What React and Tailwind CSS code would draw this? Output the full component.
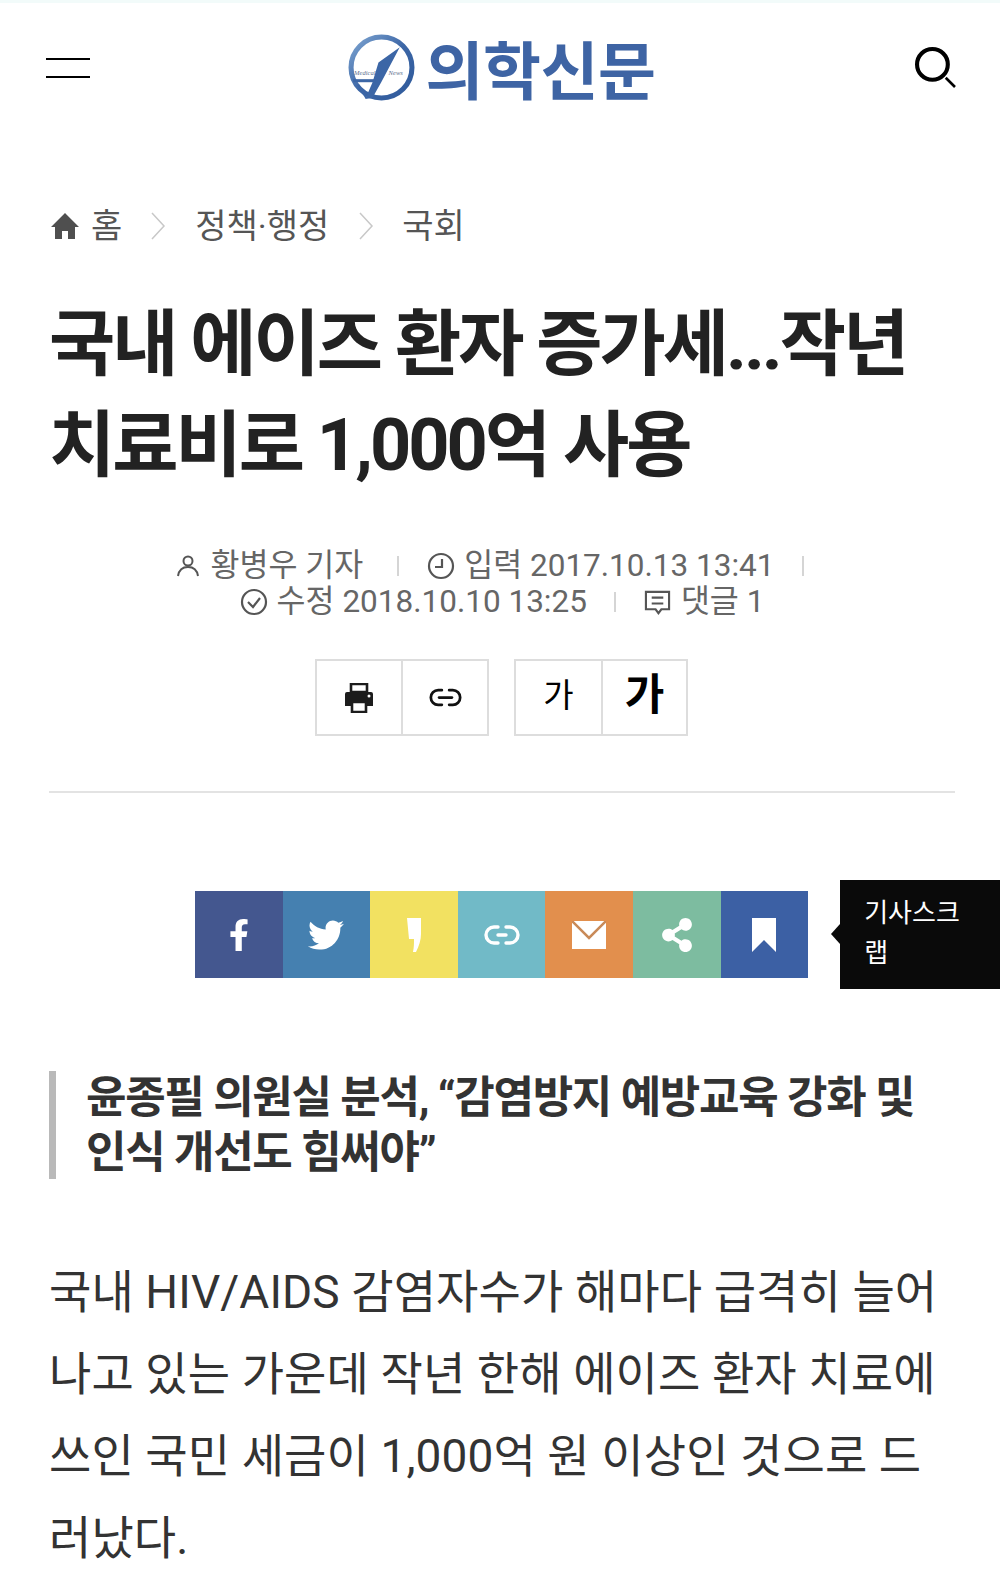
import React from 'react';
import { FaFacebookF, FaTwitter, FaShareAlt } from 'react-icons/fa';

const KR = '[font-family:Roboto,"Noto_Sans_CJK_KR",sans-serif]';

const LinkIcon = ({ color = '#111', className = '', dash = 'M11 10h14', width = 3 }) => (
  <svg viewBox="0 0 36 20" className={className} fill="none" stroke={color} strokeWidth={width} strokeLinecap="round">
    <path d="M14 2H10a8 8 0 0 0 0 16h4" />
    <path d="M22 2h4a8 8 0 0 1 0 16h-4" />
    <path d={dash} />
  </svg>
);

const Logo = () => (
  <div className="flex items-center gap-[11px]">
    <svg viewBox="0 0 66 66" className="w-[67px] h-[67px]">
      <defs>
        <linearGradient id="ring" x1="0" y1="0" x2="1" y2="1">
          <stop offset="0" stopColor="#7fa6d2" />
          <stop offset="0.5" stopColor="#3c66a6" />
          <stop offset="1" stopColor="#2f5a9b" />
        </linearGradient>
      </defs>
      <circle cx="33" cy="33" r="30" fill="#fff" stroke="url(#ring)" strokeWidth="5" />
      <path d="M51 13 L30 28 L24 48 L17 64 L24 63 L33 47 Z" fill="#3c66a6" />
      <path d="M5 46H27" stroke="#3c66a6" strokeWidth="3" />
      <path d="M10 50 L18 63" stroke="#3c66a6" strokeWidth="2" />
      <text x="6" y="40" fontSize="6.5" fontStyle="italic" fontFamily="Liberation Serif, serif" fill="#5d6f8e">Medical</text>
      <text x="40" y="40" fontSize="6.5" fontStyle="italic" fontFamily="Liberation Serif, serif" fill="#5d6f8e">News</text>
    </svg>
    <span className="[font-family:'Noto_Sans_CJK_KR',sans-serif] font-bold text-[63px] leading-none text-[#3e64a4] tracking-[-0.5px] mt-[-2px]">의학신문</span>
  </div>
);

const Chevron = () => (
  <svg viewBox="0 0 16 30" className="w-[16px] h-[30px]" fill="none" stroke="#c8c8c8" strokeWidth="1.5">
    <path d="M2 2l12 13L2 28" />
  </svg>
);

const Sep = ({ className = '' }) => <span className={`inline-block w-[2px] h-[20px] bg-[#d5d5d5] ${className}`} />;

const shareCells = [
  { bg: 'bg-[#44578f]', icon: <FaFacebookF className="text-white w-[30px] h-[32px]" /> },
  { bg: 'bg-[#4580b0]', icon: <FaTwitter className="text-white w-[36px] h-[36px]" /> },
  {
    bg: 'bg-[#f2e161]',
    icon: (
      <svg viewBox="0 0 16 34" className="w-[16px] h-[34px]" fill="#fff">
        <path d="M1 0h14v16c0 6-2 12-5 18H7c1-5 1-9 1-13H3z" />
      </svg>
    ),
  },
  { bg: 'bg-[#71bac7]', icon: <LinkIcon color="#fff" dash="M14 10h8" width={3.4} className="w-[36px] h-[20px]" /> },
  {
    bg: 'bg-[#e28f4d]',
    icon: (
      <svg viewBox="0 0 34 28" className="w-[34px] h-[28px]">
        <path d="M0 0h34v28H0z" fill="#fff" />
        <path d="M0 0l17 17L34 0" fill="none" stroke="#c98a58" strokeWidth="2.5" />
      </svg>
    ),
  },
  { bg: 'bg-[#7dbca0]', icon: <FaShareAlt className="text-white w-[34px] h-[34px]" /> },
  {
    bg: 'bg-[#3c60a4]',
    icon: (
      <svg viewBox="0 0 24 34" className="w-[24px] h-[34px]" fill="#fff">
        <path d="M0 0h24v34L12 22 0 34z" />
      </svg>
    ),
  },
];

export default function App() {
  return (
    <div className={`w-[1000px] h-[1593px] overflow-hidden bg-white ${KR}`}>
      <div className="h-[3px] bg-[#f2fbfa]" />

      <header className="relative flex items-center justify-between h-[129px] pl-[46px] pr-[44px]">
        <div className="flex flex-col gap-[16px] w-[44px]">
          <span className="h-[2px] bg-black" />
          <span className="h-[2px] bg-black" />
        </div>
        <div className="ml-[-2px]">
          <Logo />
        </div>
        <svg viewBox="0 0 40 40" className="w-[41px] h-[41px]" fill="none" stroke="#000" strokeWidth="4">
          <circle cx="17" cy="17" r="15" />
          <path d="M30 30l9 9" strokeWidth="2.5" />
        </svg>
      </header>

      <nav className="flex items-center mt-[74px] h-[40px] pl-[51px] text-[34px] text-[#555]">
        <svg viewBox="0 0 28 26" className="w-[28px] h-[26px]" fill="#4f4f4f">
          <path d="M14 0L0 14h4v12h7v-8h6v8h7V14h4z" />
        </svg>
        <span className="ml-[12px]">홈</span>
        <span className="ml-[28px]"><Chevron /></span>
        <span className="ml-[29px]">정책·행정</span>
        <span className="ml-[29px]"><Chevron /></span>
        <span className="ml-[28px]">국회</span>
      </nav>

      <h1 className="mt-[48px] pl-[49px] text-[72px] leading-[101px] font-bold text-[#222] tracking-[-3px] whitespace-nowrap">
        <div>국내 에이즈 환자 증가세...작년</div>
        <div>치료비로 1,000억 사용</div>
      </h1>

      <div className="mt-[52px] flex flex-col items-center text-[31.5px] leading-[36px] text-[#666] whitespace-nowrap">
        <div className="flex items-center ml-[-21px]">
          <svg viewBox="0 0 24 24" className="w-[24px] h-[24px]" fill="none" stroke="#555" strokeWidth="2">
            <circle cx="12" cy="7" r="4.5" />
            <path d="M2 22c1-6 5-9 10-9s9 3 10 9" />
          </svg>
          <span className="ml-[11px]">황병우 기자</span>
          <Sep className="ml-[34px]" />
          <svg viewBox="0 0 28 28" className="ml-[28px] w-[28px] h-[28px]" fill="none" stroke="#555" strokeWidth="2.2">
            <circle cx="14" cy="14" r="12" />
            <path d="M15 7v8H8" />
          </svg>
          <span className="ml-[9px]">입력 2017.10.13 13:41</span>
          <Sep className="ml-[27px]" />
        </div>
        <div className="flex items-center ml-[4px]">
          <svg viewBox="0 0 28 28" className="w-[28px] h-[28px]" fill="none" stroke="#555" strokeWidth="2.2">
            <circle cx="14" cy="14" r="12" />
            <path d="M8 14l5 5 7-9" />
          </svg>
          <span className="ml-[9px]">수정 2018.10.10 13:25</span>
          <Sep className="ml-[27px]" />
          <svg viewBox="0 0 28 28" className="ml-[28px] w-[27px] h-[27px]" fill="none" stroke="#555" strokeWidth="2.2">
            <path d="M2 3h24v18H18l-3 4-3-4H2z" />
            <path d="M8 9h12M8 15h12" />
          </svg>
          <span className="ml-[10px]">댓글 1</span>
        </div>
      </div>

      <div className="mt-[39px] flex justify-center gap-[25px] ml-[1px]">
        <div className="flex h-[77px] border-2 border-[#dddddd] ml-[2px]">
          <div className="w-[86px] flex items-center justify-center border-r-2 border-[#dddddd]">
            <svg viewBox="0 0 30 30" className="w-[30px] h-[30px]">
              <path d="M7 1h16v8H7z" fill="none" stroke="#1c1c1c" strokeWidth="2.6" />
              <path d="M3 9h24a2 2 0 0 1 2 2v12h-6v-5H7v5H1V11a2 2 0 0 1 2-2z" fill="#1c1c1c" />
              <path d="M8 19h14v10H8z" fill="none" stroke="#1c1c1c" strokeWidth="2.6" />
              <circle cx="25" cy="13" r="1.5" fill="#fff" />
            </svg>
          </div>
          <div className="w-[84px] flex items-center justify-center">
            <LinkIcon className="w-[33px] h-[19px]" />
          </div>
        </div>
        <div className="flex h-[77px] border-2 border-[#dddddd] text-black">
          <div className="w-[87px] flex items-center justify-center border-r-2 border-[#dddddd] text-[33px] pb-[3px]">가</div>
          <div className="w-[83px] flex items-center justify-center text-[43px] font-bold pb-[4px]">가</div>
        </div>
      </div>

      <hr className="mt-[55px] ml-[49px] w-[906px] border-t-2 border-[#e3e3e3]" />

      <div className="mt-[87px] flex items-center pl-[195px] relative">
        <div className="flex h-[87px]">
          {shareCells.map((cell, i) => (
            <div key={i} className={`w-[87.6px] flex items-center justify-center ${cell.bg}`}>
              {cell.icon}
            </div>
          ))}
        </div>
        <div className="relative ml-[32px] w-[160px] h-[109px] bg-[#0a0a0a] text-white text-[26px] leading-[40px] pl-[24px] pt-[13px] mt-[0px]">
          <span className="absolute left-[-9px] top-[44px] w-0 h-0 border-y-[10px] border-y-transparent border-r-[9px] border-r-[#0a0a0a]" />
          <div>기사스크</div>
          <div>랩</div>
        </div>
      </div>

      <div className="mt-[82px] ml-[49px] border-l-[7px] border-[#b9b9b9] pl-[30px] h-[108px] text-[44px] leading-[55px] font-bold text-[#333] tracking-[-1.3px] whitespace-nowrap">
        <div>윤종필 의원실 분석, “감염방지 예방교육 강화 및</div>
        <div>인식 개선도 힘써야”</div>
      </div>

      <div className="mt-[72px] pl-[49px] text-[46px] leading-[82px] text-[#333] tracking-[0.1px] whitespace-nowrap">
        <div>국내 HIV/AIDS 감염자수가 해마다 급격히 늘어</div>
        <div>나고 있는 가운데 작년 한해 에이즈 환자 치료에</div>
        <div>쓰인 국민 세금이 1,000억 원 이상인 것으로 드</div>
        <div>러났다.</div>
      </div>
    </div>
  );
}
